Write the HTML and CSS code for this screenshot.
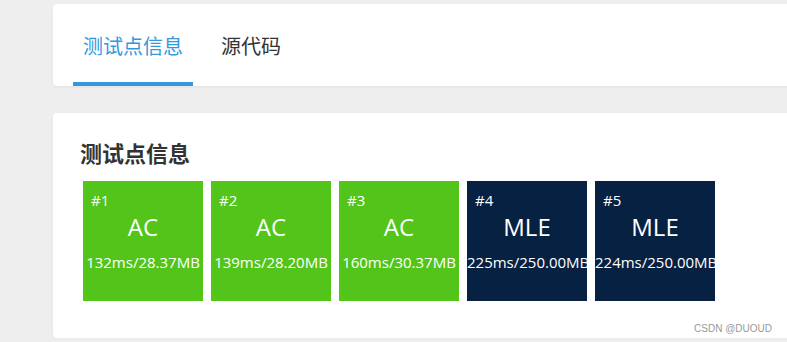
FILE: index.html
```html
<!DOCTYPE html>
<html>
  <head>
    <meta charset="UTF-8" />
    <title>测试点信息</title>
    <link rel="stylesheet" href="styles.css">
  </head>
  <body>
    <div class="card tabs-card">
      <div class="tab active">测试点信息</div>
      <div class="tab">源代码</div>
    </div>

    <div class="card cases-card">
      <h2 class="cases-title">测试点信息</h2>
      <div class="cases">
        <div class="case case-ac">
          <span class="case-no">#1</span>
          <span class="case-verdict">AC</span>
          <span class="case-stat">132ms/28.37MB</span>
        </div>
        <div class="case case-ac">
          <span class="case-no">#2</span>
          <span class="case-verdict">AC</span>
          <span class="case-stat">139ms/28.20MB</span>
        </div>
        <div class="case case-ac">
          <span class="case-no">#3</span>
          <span class="case-verdict">AC</span>
          <span class="case-stat">160ms/30.37MB</span>
        </div>
        <div class="case case-mle">
          <span class="case-no">#4</span>
          <span class="case-verdict">MLE</span>
          <span class="case-stat">225ms/250.00MB</span>
        </div>
        <div class="case case-mle">
          <span class="case-no">#5</span>
          <span class="case-verdict">MLE</span>
          <span class="case-stat">224ms/250.00MB</span>
        </div>
      </div>
      <div class="watermark">CSDN @DUOUD</div>
    </div>
  </body>
</html>
```

FILE: styles.css
```css
body {
    margin: 0;
    background: #eeeeee;
    font-family: "Open Sans", "Noto Sans CJK SC", sans-serif;
    overflow: hidden;
}
.card {
    background: #fff;
    border-radius: 4px;
    margin-left: 53px;
    margin-right: -20px;
    box-shadow: 0 1px 3px rgba(0, 0, 0, 0.06);
}
.tabs-card {
    margin-top: 4px;
    height: 82px;
    display: flex;
    padding-left: 20px;
    gap: 18px;
}
.tab {
    display: flex;
    align-items: center;
    padding: 0 10px;
    border-top: 4px solid transparent;
    border-bottom: 4px solid transparent;
    font-size: 20px;
    color: #333;
}
.tab.active {
    color: #3399dd;
    border-bottom-color: #3399dd;
}
.cases-card {
    position: relative; /* watermark sits in the corner */
    margin-top: 27px;
    padding: 25px 0 37px 27px;
}
.cases-title {
    margin: 0 0 13px;
    font-size: 22px;
    line-height: 30px;
    font-weight: bold;
    color: #333;
}
.cases {
    display: flex;
    gap: 8px;
    margin-left: 3px;
}
.case {
    width: 120px;
    height: 120px;
    box-sizing: border-box;
    padding-top: 10px;
    display: flex;
    flex-direction: column;
    color: #fff;
    white-space: nowrap;
}
.case-ac { background: #52c41a; }
.case-mle { background: #072142; }
.case-no {
    font-size: 15px;
    line-height: 18px;
    padding-left: 8px;
}
.case-verdict {
    font-size: 24px;
    line-height: 36px;
    text-align: center;
}
.case-stat {
    margin-top: 7px;
    font-size: 15px;
    line-height: 20px;
    text-align: center;
}
.watermark {
    position: absolute;
    right: 35px;
    bottom: 4px;
    font-family: "Liberation Sans", sans-serif;
    font-size: 10px;
    color: #999;
}
```
